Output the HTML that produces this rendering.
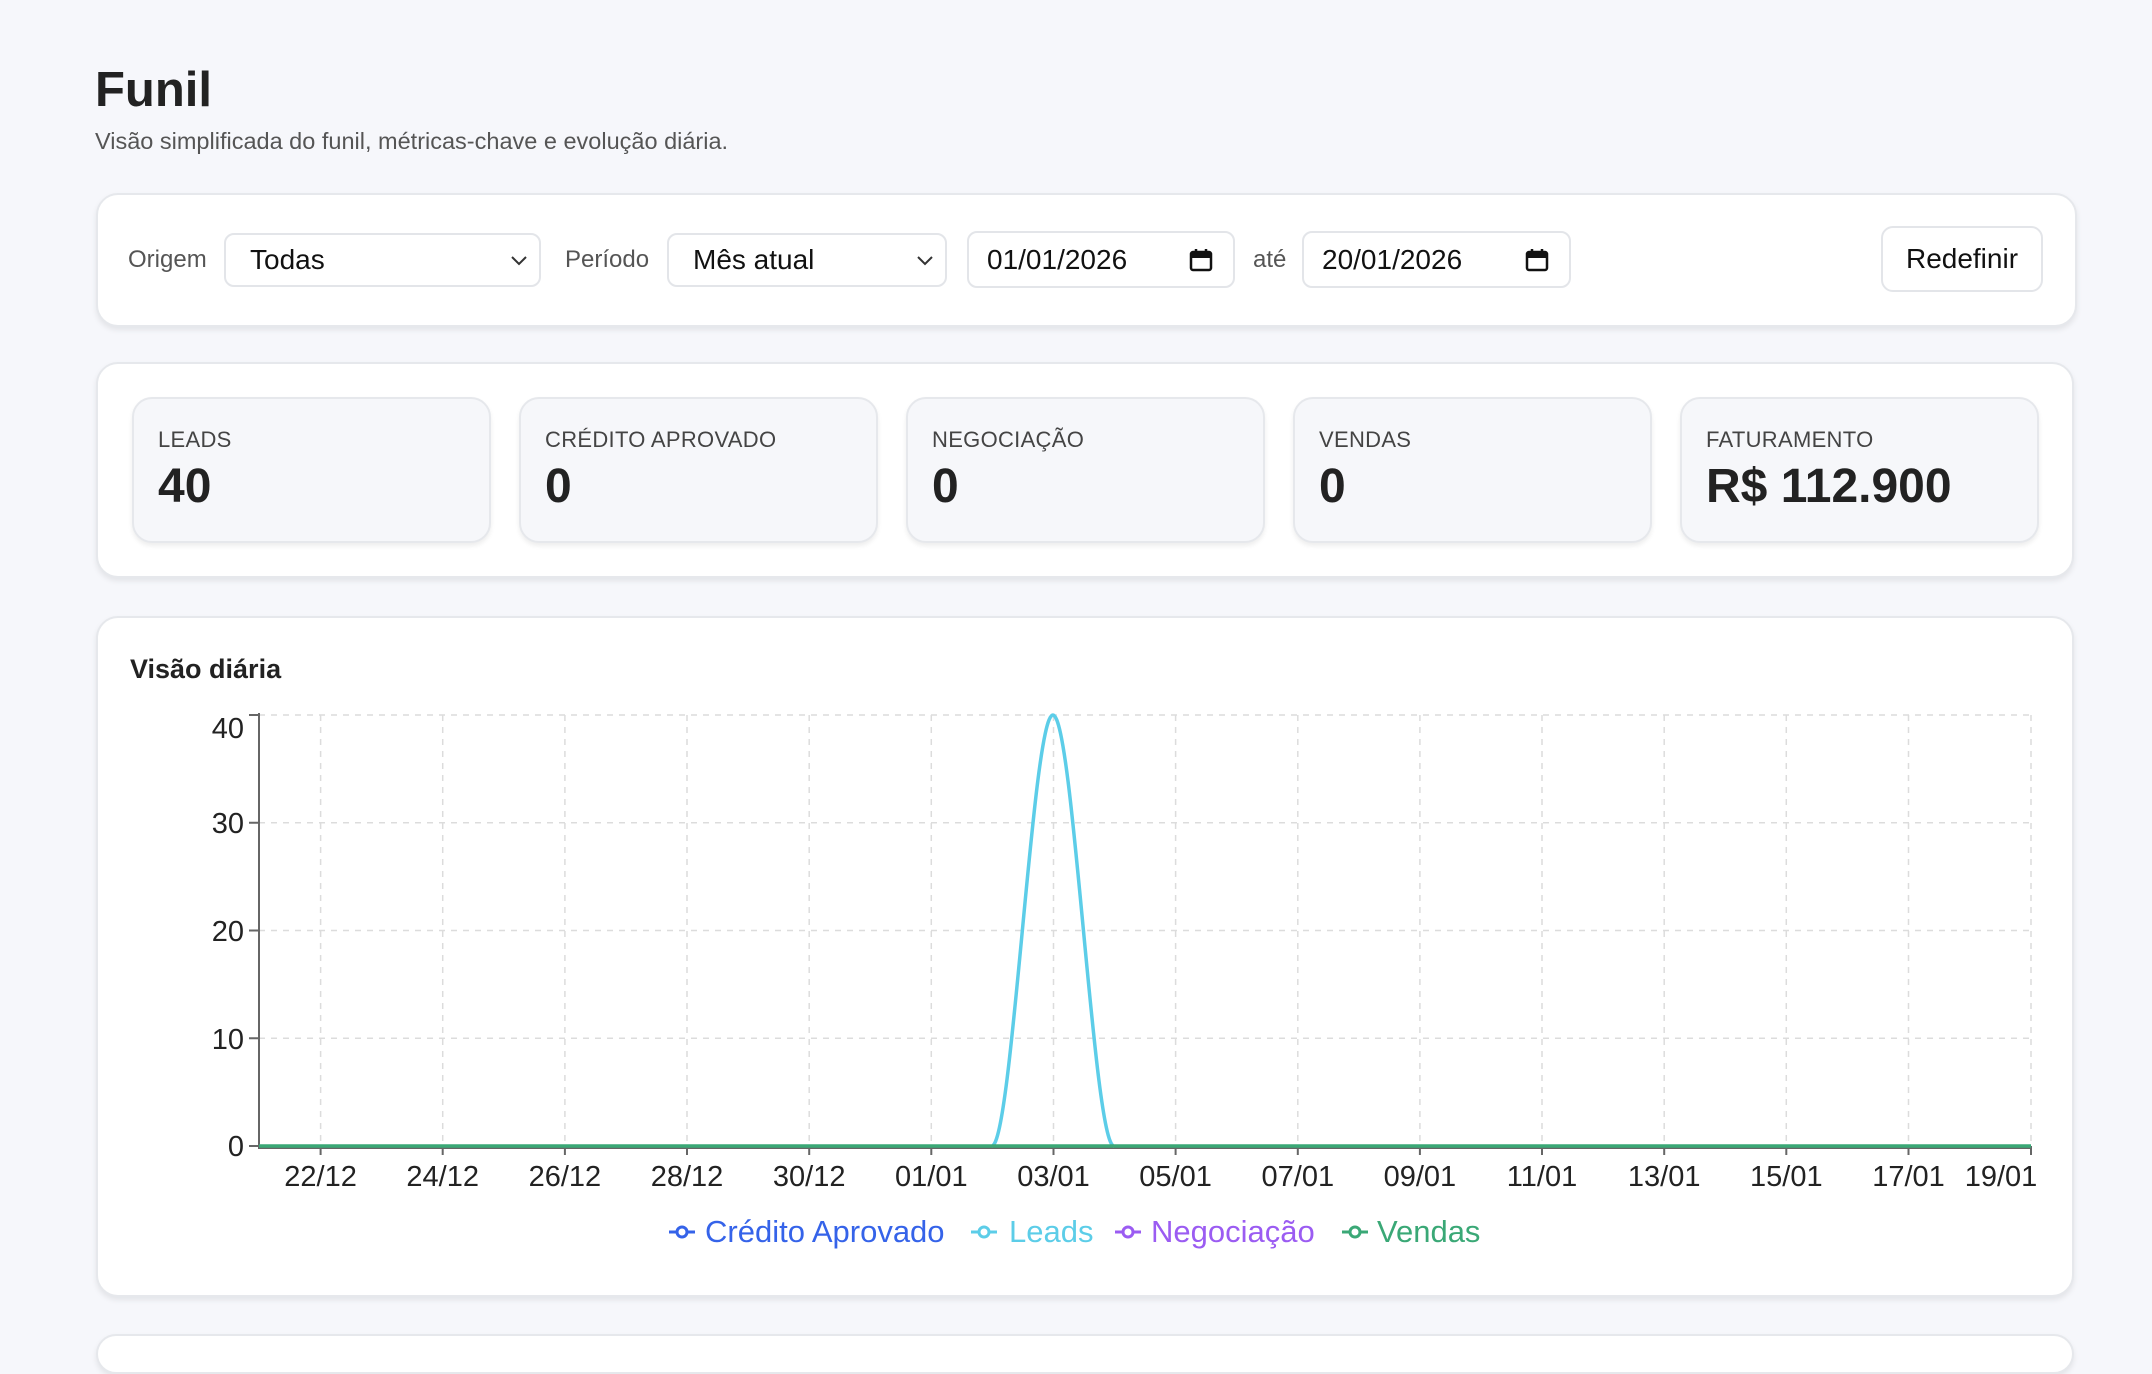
<!DOCTYPE html>
<html><head><meta charset="utf-8"><style>
*{box-sizing:border-box;margin:0;padding:0}
body{width:2152px;height:1344px;overflow:hidden;background:#f6f7fb;font-family:"Liberation Sans",Arial,sans-serif;color:#222;position:relative}
.abs{position:absolute}
.card{position:absolute;background:#fff;border:2px solid #e6e8ec;border-radius:22px;box-shadow:0 3px 6px rgba(0,0,0,.08)}
.lbl{position:absolute;font-size:24px;color:#555;transform:translateY(-50%)}
.inp{position:absolute;background:#fff;border:2px solid #e3e5e9;border-radius:10px;font-size:28px;color:#111;display:flex;align-items:center}
.tile{position:absolute;top:397px;width:359px;height:146px;background:#f6f7fa;border:2px solid #e6e8ec;border-radius:20px;box-shadow:0 3px 5px rgba(0,0,0,.07)}
.tile .t{position:absolute;left:24px;top:28px;font-size:22px;color:#444;letter-spacing:.3px}
.tile .v{position:absolute;left:24px;top:60px;font-size:48px;font-weight:bold;color:#222}
</style></head><body>
<div class="abs" style="left:95px;top:62px;font-size:49px;font-weight:bold;color:#222">Funil</div>
<div class="abs" style="left:95px;top:128px;font-size:23.5px;color:#555">Visão simplificada do funil, métricas-chave e evolução diária.</div>

<div class="card" style="left:96px;top:193px;width:1981px;height:134px"></div>
<div class="lbl" style="left:128px;top:260px">Origem</div>
<div class="inp" style="left:224px;top:233px;width:317px;height:54px;padding-left:24px">Todas<svg class="abs" style="right:10px;top:19px" width="20" height="14" viewBox="0 0 20 14"><path d="M3 3l7 7 7-7" fill="none" stroke="#333" stroke-width="2"/></svg></div>
<div class="lbl" style="left:565px;top:260px">Período</div>
<div class="inp" style="left:667px;top:233px;width:280px;height:54px;padding-left:24px">Mês atual<svg class="abs" style="right:10px;top:19px" width="20" height="14" viewBox="0 0 20 14"><path d="M3 3l7 7 7-7" fill="none" stroke="#333" stroke-width="2"/></svg></div>
<div class="inp" style="left:967px;top:231px;width:268px;height:57px;padding-left:18px">01/01/2026<svg class="abs" style="right:20px;top:15px" width="24" height="24" viewBox="0 0 24 24"><rect x="2" y="4" width="20" height="18" rx="2" fill="none" stroke="#111" stroke-width="2.5"/><rect x="2" y="4" width="20" height="6" fill="#111"/><path d="M7 1v5M17 1v5" stroke="#111" stroke-width="2.5"/></svg></div>
<div class="lbl" style="left:1253px;top:260px">até</div>
<div class="inp" style="left:1302px;top:231px;width:269px;height:57px;padding-left:18px">20/01/2026<svg class="abs" style="right:20px;top:15px" width="24" height="24" viewBox="0 0 24 24"><rect x="2" y="4" width="20" height="18" rx="2" fill="none" stroke="#111" stroke-width="2.5"/><rect x="2" y="4" width="20" height="6" fill="#111"/><path d="M7 1v5M17 1v5" stroke="#111" stroke-width="2.5"/></svg></div>
<div class="inp" style="left:1881px;top:226px;width:162px;height:66px;justify-content:center;border-radius:12px">Redefinir</div>

<div class="card" style="left:96px;top:362px;width:1978px;height:216px"></div>
<div class="tile" style="left:132px"><div class="t">LEADS</div><div class="v">40</div></div>
<div class="tile" style="left:519px"><div class="t">CRÉDITO APROVADO</div><div class="v">0</div></div>
<div class="tile" style="left:906px"><div class="t">NEGOCIAÇÃO</div><div class="v">0</div></div>
<div class="tile" style="left:1293px"><div class="t">VENDAS</div><div class="v">0</div></div>
<div class="tile" style="left:1680px"><div class="t">FATURAMENTO</div><div class="v">R$ 112.900</div></div>

<div class="card" style="left:96px;top:616px;width:1978px;height:681px"></div>
<div class="card" style="left:96px;top:1334px;width:1978px;height:40px"></div>
<div class="abs" style="left:130px;top:654px;font-size:27px;font-weight:bold;color:#222">Visão diária</div>

<svg class="abs" style="left:0;top:0" width="2152" height="1344" font-family="Liberation Sans, Arial, sans-serif">
<g stroke="#dcdcdc" stroke-width="1.5" stroke-dasharray="6 6" fill="none">
<path d="M259 715H2031M259 822.7H2031M259 930.5H2031M259 1038.2H2031"/>
<path d="M320.6 715V1146M442.7 715V1146M564.9 715V1146M687 715V1146M809.2 715V1146M931.3 715V1146M1053.5 715V1146M1175.6 715V1146M1297.8 715V1146M1419.9 715V1146M1542 715V1146M1664.2 715V1146M1786.3 715V1146M1908.5 715V1146M2031 715V1146"/>
</g>
<g stroke="#666" stroke-width="2" fill="none">
<path d="M259 713V1148H2031"/>
<path d="M249 715H259M249 822.7H259M249 930.5H259M249 1038.2H259M249 1146H259"/>
<path d="M320.6 1146v9M442.7 1146v9M564.9 1146v9M687 1146v9M809.2 1146v9M931.3 1146v9M1053.5 1146v9M1175.6 1146v9M1297.8 1146v9M1419.9 1146v9M1542 1146v9M1664.2 1146v9M1786.3 1146v9M1908.5 1146v9M2031 1146v9"/>
</g>
<g font-size="29" fill="#222" text-anchor="end">
<text x="244" y="738">40</text><text x="244" y="833">30</text><text x="244" y="941">20</text><text x="244" y="1049">10</text><text x="244" y="1156">0</text>
</g>
<g font-size="29" fill="#222" text-anchor="middle">
<text x="320.6" y="1186">22/12</text><text x="442.7" y="1186">24/12</text><text x="564.9" y="1186">26/12</text><text x="687" y="1186">28/12</text><text x="809.2" y="1186">30/12</text><text x="931.3" y="1186">01/01</text><text x="1053.5" y="1186">03/01</text><text x="1175.6" y="1186">05/01</text><text x="1297.8" y="1186">07/01</text><text x="1419.9" y="1186">09/01</text><text x="1542" y="1186">11/01</text><text x="1664.2" y="1186">13/01</text><text x="1786.3" y="1186">15/01</text><text x="1908.5" y="1186">17/01</text><text x="2001" y="1186">19/01</text>
</g>
<path d="M991.8 1146C1012.2 1146 1032.5 715 1052.9 715C1073.3 715 1093.6 1146 1114 1146" fill="none" stroke="#5ccde8" stroke-width="3.5"/>
<path d="M259 1146H2031" stroke="#3aa876" stroke-width="3.5"/>
<g font-size="31">
<path d="M669 1232h26" stroke="#3563e9" stroke-width="3"/><circle cx="682" cy="1232" r="5" fill="#fff" stroke="#3563e9" stroke-width="3"/><text x="705" y="1242" fill="#3563e9">Crédito Aprovado</text>
<path d="M971 1232h26" stroke="#5ccde8" stroke-width="3"/><circle cx="984" cy="1232" r="5" fill="#fff" stroke="#5ccde8" stroke-width="3"/><text x="1009" y="1242" fill="#5ccde8">Leads</text>
<path d="M1115 1232h26" stroke="#9b5cf2" stroke-width="3"/><circle cx="1128" cy="1232" r="5" fill="#fff" stroke="#9b5cf2" stroke-width="3"/><text x="1151" y="1242" fill="#9b5cf2">Negociação</text>
<path d="M1342 1232h26" stroke="#3aa876" stroke-width="3"/><circle cx="1355" cy="1232" r="5" fill="#fff" stroke="#3aa876" stroke-width="3"/><text x="1377" y="1242" fill="#3aa876">Vendas</text>
</g>
</svg>
</body></html>
